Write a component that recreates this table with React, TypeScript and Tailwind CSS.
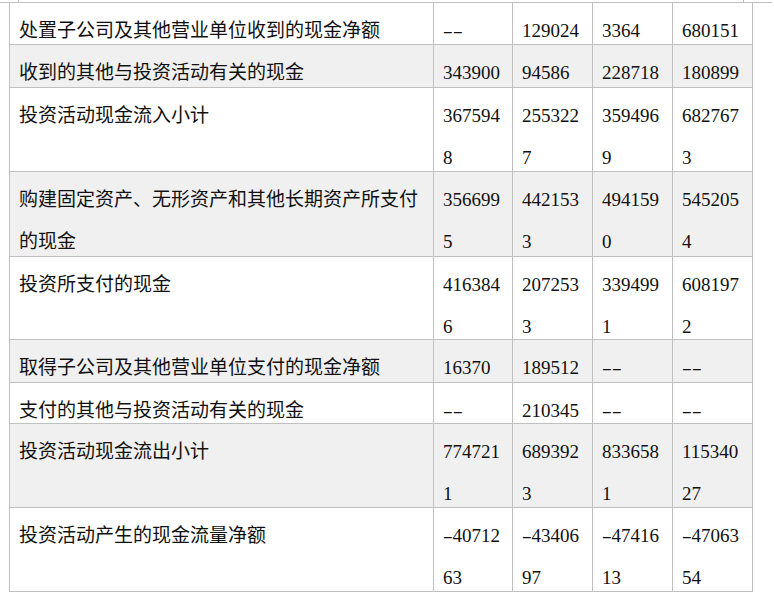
const rows: { label: string[]; values: string[][]; h: string }[] = [
  { label: ['处置子公司及其他营业单位收到的现金净额'], values: [['--'], ['129024'], ['3364'], ['680151']], h: 'h-[41px]' },
  { label: ['收到的其他与投资活动有关的现金'], values: [['343900'], ['94586'], ['228718'], ['180899']], h: 'h-[42px]' },
  {
    label: ['投资活动现金流入小计'],
    values: [['367594', '8'], ['255322', '7'], ['359496', '9'], ['682767', '3']],
    h: 'h-[83px]',
  },
  {
    label: ['购建固定资产、无形资产和其他长期资产所支付', '的现金'],
    values: [['356699', '5'], ['442153', '3'], ['494159', '0'], ['545205', '4']],
    h: 'h-[84px]',
  },
  {
    label: ['投资所支付的现金'],
    values: [['416384', '6'], ['207253', '3'], ['339499', '1'], ['608197', '2']],
    h: 'h-[82px]',
  },
  { label: ['取得子公司及其他营业单位支付的现金净额'], values: [['16370'], ['189512'], ['--'], ['--']], h: 'h-[42px]' },
  { label: ['支付的其他与投资活动有关的现金'], values: [['--'], ['210345'], ['--'], ['--']], h: 'h-[40px]' },
  {
    label: ['投资活动现金流出小计'],
    values: [['774721', '1'], ['689392', '3'], ['833658', '1'], ['115340', '27']],
    h: 'h-[83px]',
  },
  {
    label: ['投资活动产生的现金流量净额'],
    values: [['-40712', '63'], ['-43406', '97'], ['-47416', '13'], ['-47063', '54']],
    h: 'h-[83px]',
  },
];

// dashes are full half-width in the source font
function Text({ s }: { s: string }) {
  if (!s.includes('-')) return <>{s}</>;
  return (
    <>
      {s.split('').map((c, i) =>
        c === '-' ? (
          <span key={i} className="inline-block w-[9.5px] text-center scale-x-[1.6]">
            -
          </span>
        ) : (
          <span key={i}>{c}</span>
        ),
      )}
    </>
  );
}

function Cell({ lines, width, h }: { lines: string[]; width: string; h: string }) {
  return (
    <div className={`${width} ${h} shrink-0 border-r border-[#c0c0c0] px-[9px] pt-[7px]`}>
      {lines.map((l, i) => (
        <div key={i} className="h-[42px] leading-[42px] whitespace-nowrap">
          <Text s={l} />
        </div>
      ))}
    </div>
  );
}

export default function App() {
  return (
    <div
      className="w-[774px] h-[599px] overflow-hidden bg-white text-[19px] text-[#111]"
      style={{ fontFamily: '"Liberation Serif", "Noto Sans CJK SC", serif' }}
    >
      <div className="flex h-[2px]">
        <div className="ml-[18px] h-[2px] w-[726px] border-l border-r border-[#c0c0c0]" />
      </div>
      <div className="h-px w-[772px] bg-[#c0c0c0]" />
      <div className="ml-[9px] w-[744px] border-l border-[#c0c0c0]">
        {rows.map((r, i) => (
          <div
            key={i}
            className={`flex border-b border-[#c0c0c0] ${i % 2 === 1 ? 'bg-[#f0f0f0]' : 'bg-white'}`}
          >
            <Cell lines={r.label} width="w-[424px]" h={r.h} />
            <Cell lines={r.values[0]} width="w-[79px]" h={r.h} />
            <Cell lines={r.values[1]} width="w-[80px]" h={r.h} />
            <Cell lines={r.values[2]} width="w-[80px]" h={r.h} />
            <Cell lines={r.values[3]} width="w-[80px]" h={r.h} />
          </div>
        ))}
      </div>
    </div>
  );
}
